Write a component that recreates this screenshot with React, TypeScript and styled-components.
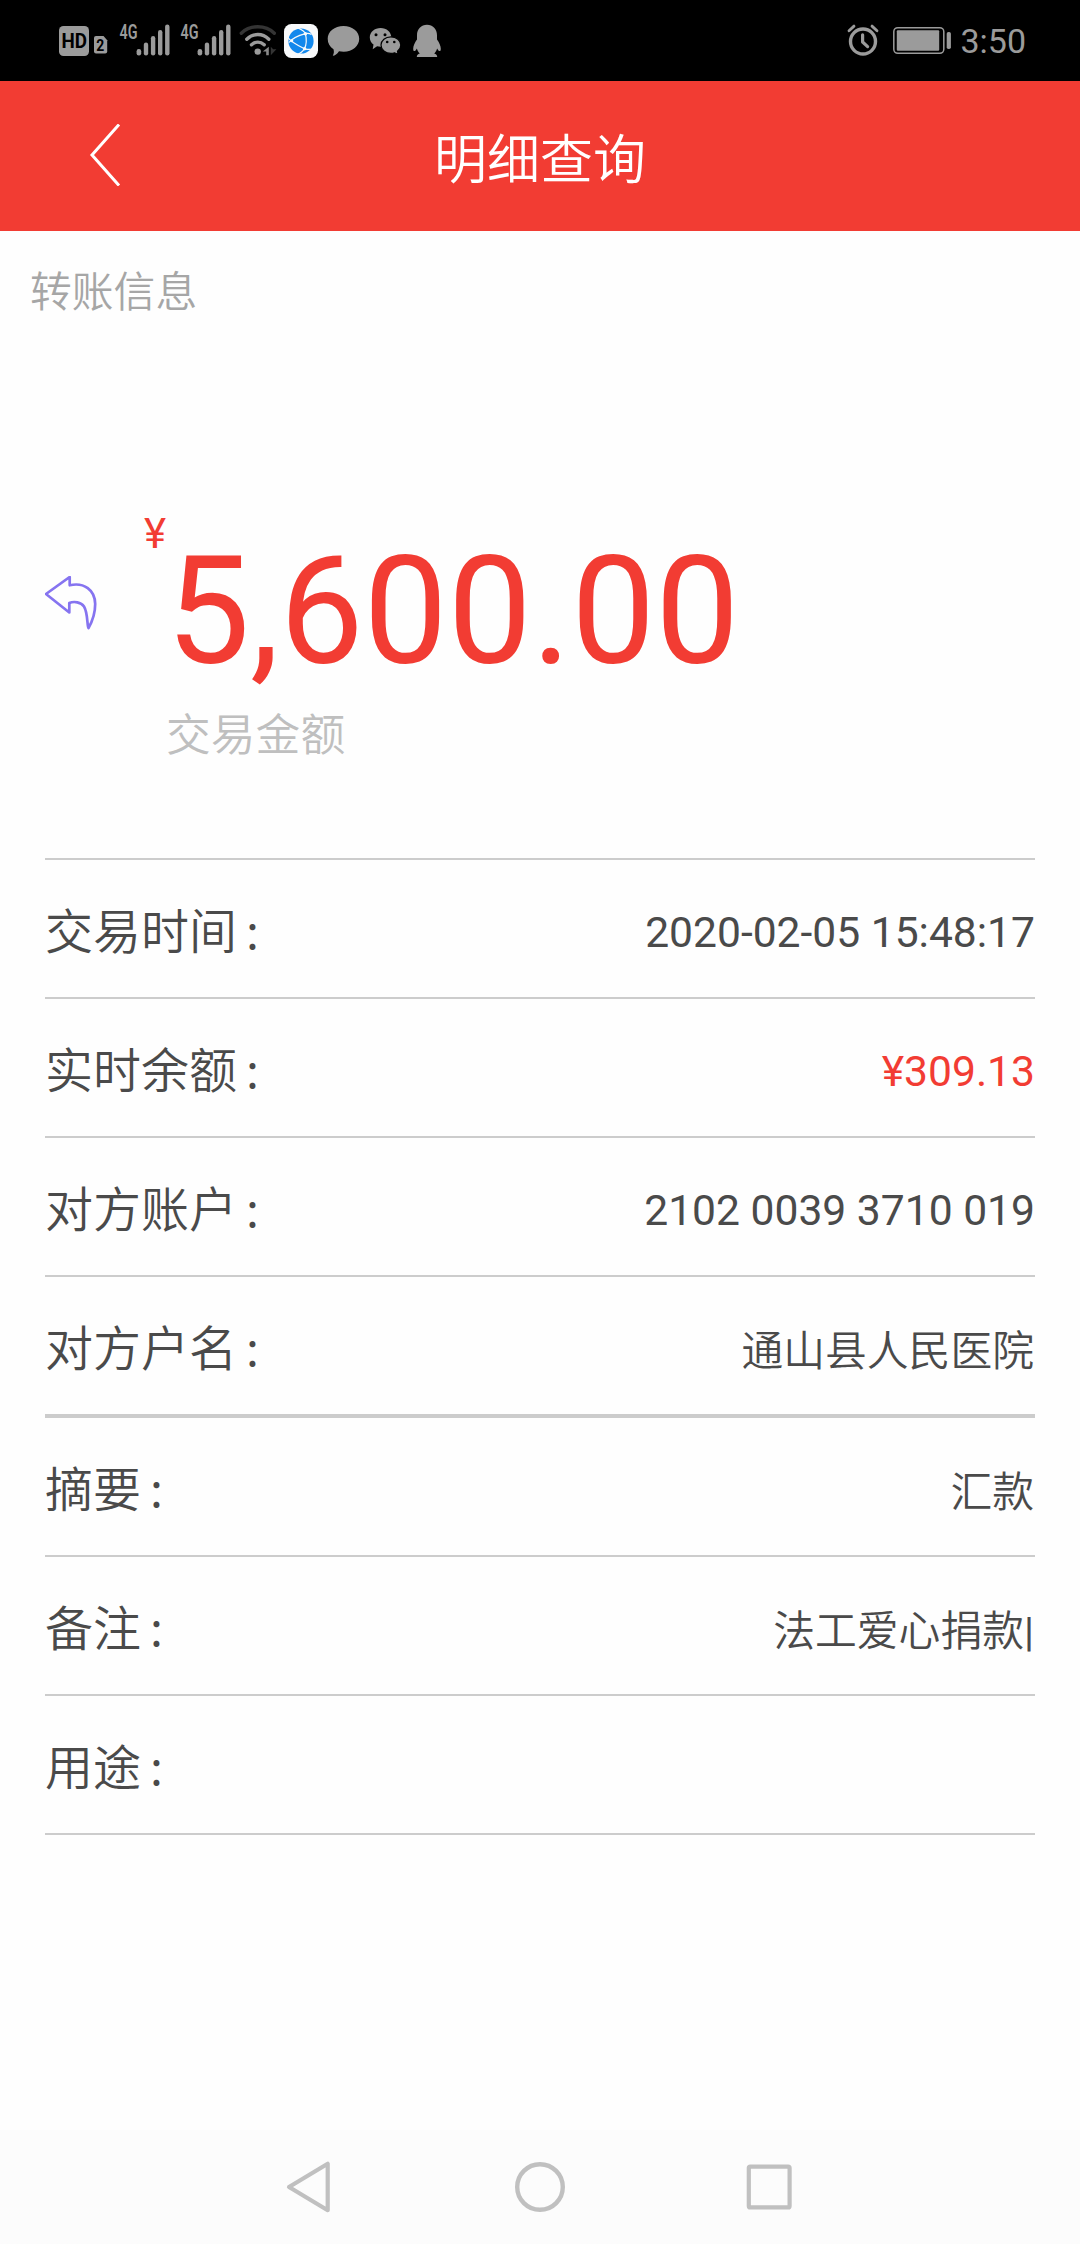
import React from 'react';
import styled, { createGlobalStyle } from 'styled-components';

const RED = '#f23c33';
const STATUS = '#9b9b9b';
const CJK = '"Noto Sans CJK SC", sans-serif';
const LATIN = 'Roboto, "Noto Sans CJK SC", sans-serif';
const TEXT_WEIGHT = 350;

const GlobalStyle = createGlobalStyle`
  * { box-sizing: border-box; }
  body { margin: 0; background: #fff; }
`;

const Screen = styled.div`
  display: flex;
  flex-direction: column;
  width: 1080px;
  height: 2244px;
  background: #fefefe;
  font-family: ${CJK};
  font-weight: ${TEXT_WEIGHT};
  overflow: hidden;
`;

const StatusBar = styled.header`
  display: flex;
  justify-content: space-between;
  height: 81px;
  padding: 0 54px 0 58px;
  background: #000;
`;

const StatusGroup = styled.div`
  display: flex;
  svg { display: block; }
`;

const Clock = styled.span`
  margin-left: 8px;
  font: 400 34px/82px ${LATIN};
  color: ${STATUS};
`;

const TitleBar = styled.nav`
  display: grid;
  grid-template-columns: 210px 1fr 210px;
  align-items: center;
  height: 150px;
  background: ${RED};
`;

const BackButton = styled.button`
  padding: 0 0 2px 88px;
  border: 0;
  background: none;
  text-align: left;
  svg { display: block; }
`;

const Title = styled.h1`
  margin: 0;
  text-align: center;
  font-size: 53px;
  line-height: 150px;
  font-weight: ${TEXT_WEIGHT};
  color: #fff;
`;

const Content = styled.main`
  flex: 1;
  display: flex;
  flex-direction: column;
`;

const SectionTitle = styled.h2`
  margin: 27px 0 0 30px;
  font-size: 41.8px;
  line-height: 62px;
  font-weight: ${TEXT_WEIGHT};
  color: #a6a6a6;
`;

const Summary = styled.section`
  display: grid;
  grid-template-columns: 98px 1fr;
  margin: 189px 45px 0;
  height: 349px;
`;

const TransferIcon = styled.div`
  padding-top: 67px;
  svg { display: block; }
`;

const AmountRow = styled.div`
  display: flex;
  align-items: flex-start;
  color: ${RED};
  font-family: ${LATIN};
  font-weight: 400;
`;

const Currency = styled.span`
  width: 23px;
  padding-left: 1px;
  font-size: 42px;
  line-height: 50px;
`;

const Amount = styled.span`
  font-size: 149.6px;
  line-height: 180px;
  padding-top: 13px;
`;

const AmountCaption = styled.p`
  margin: -3px 0 0 23px;
  font-size: 44.8px;
  line-height: 66px;
  color: #bfbfbf;
`;

const Details = styled.dl`
  margin: 0 45px;
  border-top: 2px solid #ccc;
`;

const DetailRow = styled.div<{ $divider?: number }>`
  display: flex;
  justify-content: space-between;
  align-items: center;
  height: ${(p) => 137 + (p.$divider ?? 2)}px;
  border-bottom: ${(p) => p.$divider ?? 2}px solid #ccc;
`;

const Label = styled.dt`
  font-size: 48px;
  line-height: 137px;
  color: #4a4a4a;
`;

const Colon = styled.span`
  margin-left: 9px;
`;

const Value = styled.dd<{ $tone?: string; $numeric?: boolean }>`
  margin: 0;
  padding-top: ${(p) => (p.$numeric ? 8 : 6)}px;
  padding-right: ${(p) => (p.$numeric ? 0 : 1)}px;
  font-size: ${(p) => (p.$numeric ? 42.6 : 41.8)}px;
  line-height: 129px;
  font-family: ${(p) => (p.$numeric ? LATIN : CJK)};
  font-weight: ${(p) => (p.$numeric ? 400 : TEXT_WEIGHT)};
  color: ${(p) => p.$tone ?? '#4a4a4a'};
`;

const Bar = styled.span`
  font-family: ${LATIN};
  font-size: 41px;
  line-height: 1;
  font-weight: 400;
`;

const NavBar = styled.footer`
  display: flex;
  align-items: center;
  height: 114px;
  padding-left: 285px;
  gap: 180px;
  background: #fcfcfc;
  svg { display: block; }
`;

const NetworkSignal = () => (
  <svg width="61" height="81" viewBox="115 0 61 81" fill={STATUS}>
    <text x="119.500" y="38.500" fontFamily="Roboto, sans-serif" fontWeight="600" fontSize="19.500" textLength="18" lengthAdjust="spacingAndGlyphs">4G</text>
    <rect x="136.600" y="49" width="4.600" height="6.400" rx="2.200" />
    <rect x="143.800" y="42.500" width="4.400" height="13" rx="2.200" />
    <rect x="150.900" y="36" width="4.400" height="19.500" rx="2.200" />
    <rect x="158" y="30" width="4.400" height="25.500" rx="2.200" />
    <rect x="165.100" y="24.500" width="4.400" height="31" rx="2.200" />
  </svg>
);

const CarrierIcon = () => (
  <svg width="57" height="81" viewBox="58 0 57 81">
    <rect x="59" y="26" width="30" height="30" rx="4.500" fill={STATUS} />
    <text x="61.400" y="48.200" fontFamily="Roboto, sans-serif" fontWeight="700" fontSize="20" textLength="25.500" lengthAdjust="spacingAndGlyphs" fill="#000">HD</text>
    <path d="M96 36h7.500l3.700 4.200v11.300a2 2 0 0 1-2 2H96a2 2 0 0 1-2-2V38a2 2 0 0 1 2-2z" fill={STATUS} />
    <text x="96.200" y="51" fontFamily="Roboto, sans-serif" fontWeight="700" fontSize="16" textLength="8" lengthAdjust="spacingAndGlyphs" fill="#000">2</text>
  </svg>
);

const WifiIcon = () => (
  <svg width="46" height="81" viewBox="237 0 46 81" fill="none" strokeWidth="3.400" strokeLinecap="round">
    <path d="M241.300 33.200C250 24.600 265.500 24.600 274.300 33.200" stroke="#343434" />
    <path d="M246.800 39.200C253 33 262.500 33 268.800 39.200" stroke={STATUS} />
    <path d="M251.500 44.800C255.500 41.200 260.300 41.200 264.200 44.800" stroke={STATUS} />
    <circle cx="257.700" cy="51.600" r="3.200" fill={STATUS} />
    <path d="M268.800 46.800v8.400h-2.600v-3.600h-3.400z" fill="#888" />
    <path d="M270.800 46.800v8.400l5.600-6h-3.200z" fill="#343434" />
  </svg>
);

const BrowserIcon = () => (
  <svg width="41" height="81" viewBox="283 0 41 81" fill="none">
    <rect x="284" y="24" width="34" height="34" rx="7.500" fill="#f8f9fa" />
    <circle cx="301" cy="41" r="12.600" fill="#1388ec" />
    <g stroke="#f8f9fa" strokeWidth="1.200">
      <path d="M297 27.500Q305 31 305.500 34Q307.500 43 304.500 48.500Q302 53 297 54.500" />
      <path d="M288 37.500Q290 41.500 304.500 48.800Q309.500 50 312 49" />
      <path d="M289 42.500Q293 37 305.500 33.600Q309 33 311.500 34.500" />
    </g>
    <g fill="#f8f9fa">
      <circle cx="305.400" cy="33.800" r="1.700" />
      <circle cx="291.800" cy="40.800" r="1.500" />
      <circle cx="304.600" cy="48.700" r="1.700" />
    </g>
  </svg>
);

const MessageIcon = () => (
  <svg width="44" height="81" viewBox="324 0 44 81" fill={STATUS}>
    <path d="M343.500 26C352.500 26 359.200 31.500 359.200 38.800S352.500 51.700 343.700 51.700C342 51.700 340.500 51.500 339 51.200C337 54 335 55.700 332.800 55.700C334 53.500 334.200 51.800 333.500 49.300C329.800 47 327.700 43.200 327.700 38.800C327.700 31.500 334.500 26 343.500 26z" />
  </svg>
);

const WechatIcon = () => (
  <svg width="42" height="81" viewBox="368 0 42 81">
    <path d="M380.600 28c6 0 10.700 4 10.700 9.400s-4.700 9.400-10.700 9.400c-1.200 0-2.400-.2-3.500-.5l-4.400 2.900.8-4.600c-2.300-1.800-3.700-4.300-3.700-7.200 0-5.400 4.800-9.400 10.800-9.400z" fill={STATUS} />
    <circle cx="376" cy="34.700" r="1.500" fill="#000" />
    <circle cx="385" cy="34.700" r="1.500" fill="#000" />
    <path d="M390.900 36.800c5.500 0 9.900 3.600 9.900 8.300 0 2.600-1.300 4.700-3.300 6.200l.6 3-3.500-1.500c-1.100.4-2.400.6-3.700.6-5.500 0-9.900-3.700-9.900-8.300s4.400-8.300 9.900-8.300z" fill={STATUS} stroke="#000" strokeWidth="1.200" />
    <circle cx="387.200" cy="42" r="1.300" fill="#000" />
    <circle cx="394.300" cy="42" r="1.300" fill="#000" />
  </svg>
);

const QQIcon = () => (
  <svg width="36" height="81" viewBox="410 0 36 81" fill={STATUS}>
    <path d="M427 24.800c5.800 0 10 4.300 10 10.500v4.200c2.200 3 3.800 6.300 3.800 9.300 0 1.500-.4 2.300-1 2.300-.9 0-1.900-1.200-2.700-2.700-.5 2-1.500 3.700-2.900 5.100 1.900.7 3 1.700 3 3.400h-20.400c0-1.700 1.100-2.700 3-3.400-1.400-1.400-2.400-3.100-2.900-5.100-.8 1.500-1.800 2.700-2.700 2.700-.6 0-1-.8-1-2.300 0-3 1.600-6.300 3.800-9.300v-4.200c0-6.200 4.200-10.500 10-10.500z" />
  </svg>
);

const AlarmIcon = () => (
  <svg width="38" height="81" viewBox="846 0 38 81" fill="none" stroke={STATUS} strokeLinecap="round">
    <circle cx="863" cy="41.500" r="12.500" strokeWidth="3.400" />
    <path d="M862.600 34.800v7.200l5 4.600" strokeWidth="3.200" strokeLinejoin="round" />
    <path d="M849 30.700l5-4.600M877 30.700l-5-4.600" strokeWidth="2.800" />
  </svg>
);

const BatteryIcon = () => (
  <svg width="68" height="81" viewBox="884 0 68 81" fill={STATUS}>
    <rect x="893.800" y="27.700" width="50" height="25.600" rx="4" fill="none" stroke={STATUS} strokeWidth="1.500" />
    <rect x="896.800" y="30.300" width="42.400" height="20.400" rx="1" />
    <rect x="946.700" y="32" width="4.200" height="17" rx="1.800" />
  </svg>
);

type Detail = {
  label: string;
  value?: string;
  tone?: string;
  numeric?: boolean;
  divider?: number;
  trailingBar?: boolean;
};

const details: Detail[] = [
  { label: '交易时间', value: '2020-02-05 15:48:17', numeric: true },
  { label: '实时余额', value: '¥309.13', numeric: true, tone: RED },
  { label: '对方账户', value: '2102 0039 3710 019', numeric: true },
  { label: '对方户名', value: '通山县人民医院', divider: 4 },
  { label: '摘要', value: '汇款' },
  { label: '备注', value: '法工爱心捐款', trailingBar: true },
  { label: '用途' },
];

export default function App() {
  return (
    <Screen>
      <GlobalStyle />
      <StatusBar>
        <StatusGroup>
          <CarrierIcon />
          <NetworkSignal />
          <NetworkSignal />
          <WifiIcon />
          <BrowserIcon />
          <MessageIcon />
          <WechatIcon />
          <QQIcon />
        </StatusGroup>
        <StatusGroup>
          <AlarmIcon />
          <BatteryIcon />
          <Clock>3:50</Clock>
        </StatusGroup>
      </StatusBar>
      <TitleBar>
        <BackButton aria-label="返回">
          <svg width="34" height="62" viewBox="0 0 34 62" fill="none" stroke="#fff" strokeWidth="3">
            <path d="M31 0.500L4 31L31 61.500" />
          </svg>
        </BackButton>
        <Title>明细查询</Title>
      </TitleBar>
      <Content>
        <SectionTitle>转账信息</SectionTitle>
        <Summary>
          <TransferIcon>
            <svg width="52" height="54" viewBox="45 576 52 54" fill="none" stroke="#8674f0" strokeWidth="2.700" strokeLinejoin="round">
              <path d="M46 594L69.700 577V585.300C84 582 95 590 95.200 604C95.200 613 92.500 621 88.500 628C87 626 88 613 84 606.500C81 602 74 601 69.300 603V612.500Z" />
            </svg>
          </TransferIcon>
          <div>
            <AmountRow>
              <Currency>¥</Currency>
              <Amount>5,600.00</Amount>
            </AmountRow>
            <AmountCaption>交易金额</AmountCaption>
          </div>
        </Summary>
        <Details>
          {details.map((row) => (
            <DetailRow key={row.label} $divider={row.divider}>
              <Label>
                {row.label}
                <Colon>:</Colon>
              </Label>
              <Value $tone={row.tone} $numeric={row.numeric}>
                {row.value}
                {row.trailingBar && <Bar>|</Bar>}
              </Value>
            </DetailRow>
          ))}
        </Details>
      </Content>
      <NavBar>
        <svg width="50" height="54" viewBox="285 2160 50 54" fill="none" stroke="#c0c0c0" strokeWidth="4.200" strokeLinejoin="round">
          <path d="M289 2187L327.700 2163.800V2210.200Z" />
        </svg>
        <svg width="50" height="54" viewBox="515 2160 50 54" fill="none" stroke="#c0c0c0" strokeWidth="4.400">
          <circle cx="540" cy="2187" r="22.800" />
        </svg>
        <svg width="50" height="54" viewBox="745 2160 50 54" fill="none" stroke="#c0c0c0" strokeWidth="4.200">
          <rect x="748.800" y="2166.600" width="40.800" height="40.800" rx="1.500" />
        </svg>
      </NavBar>
    </Screen>
  );
}
